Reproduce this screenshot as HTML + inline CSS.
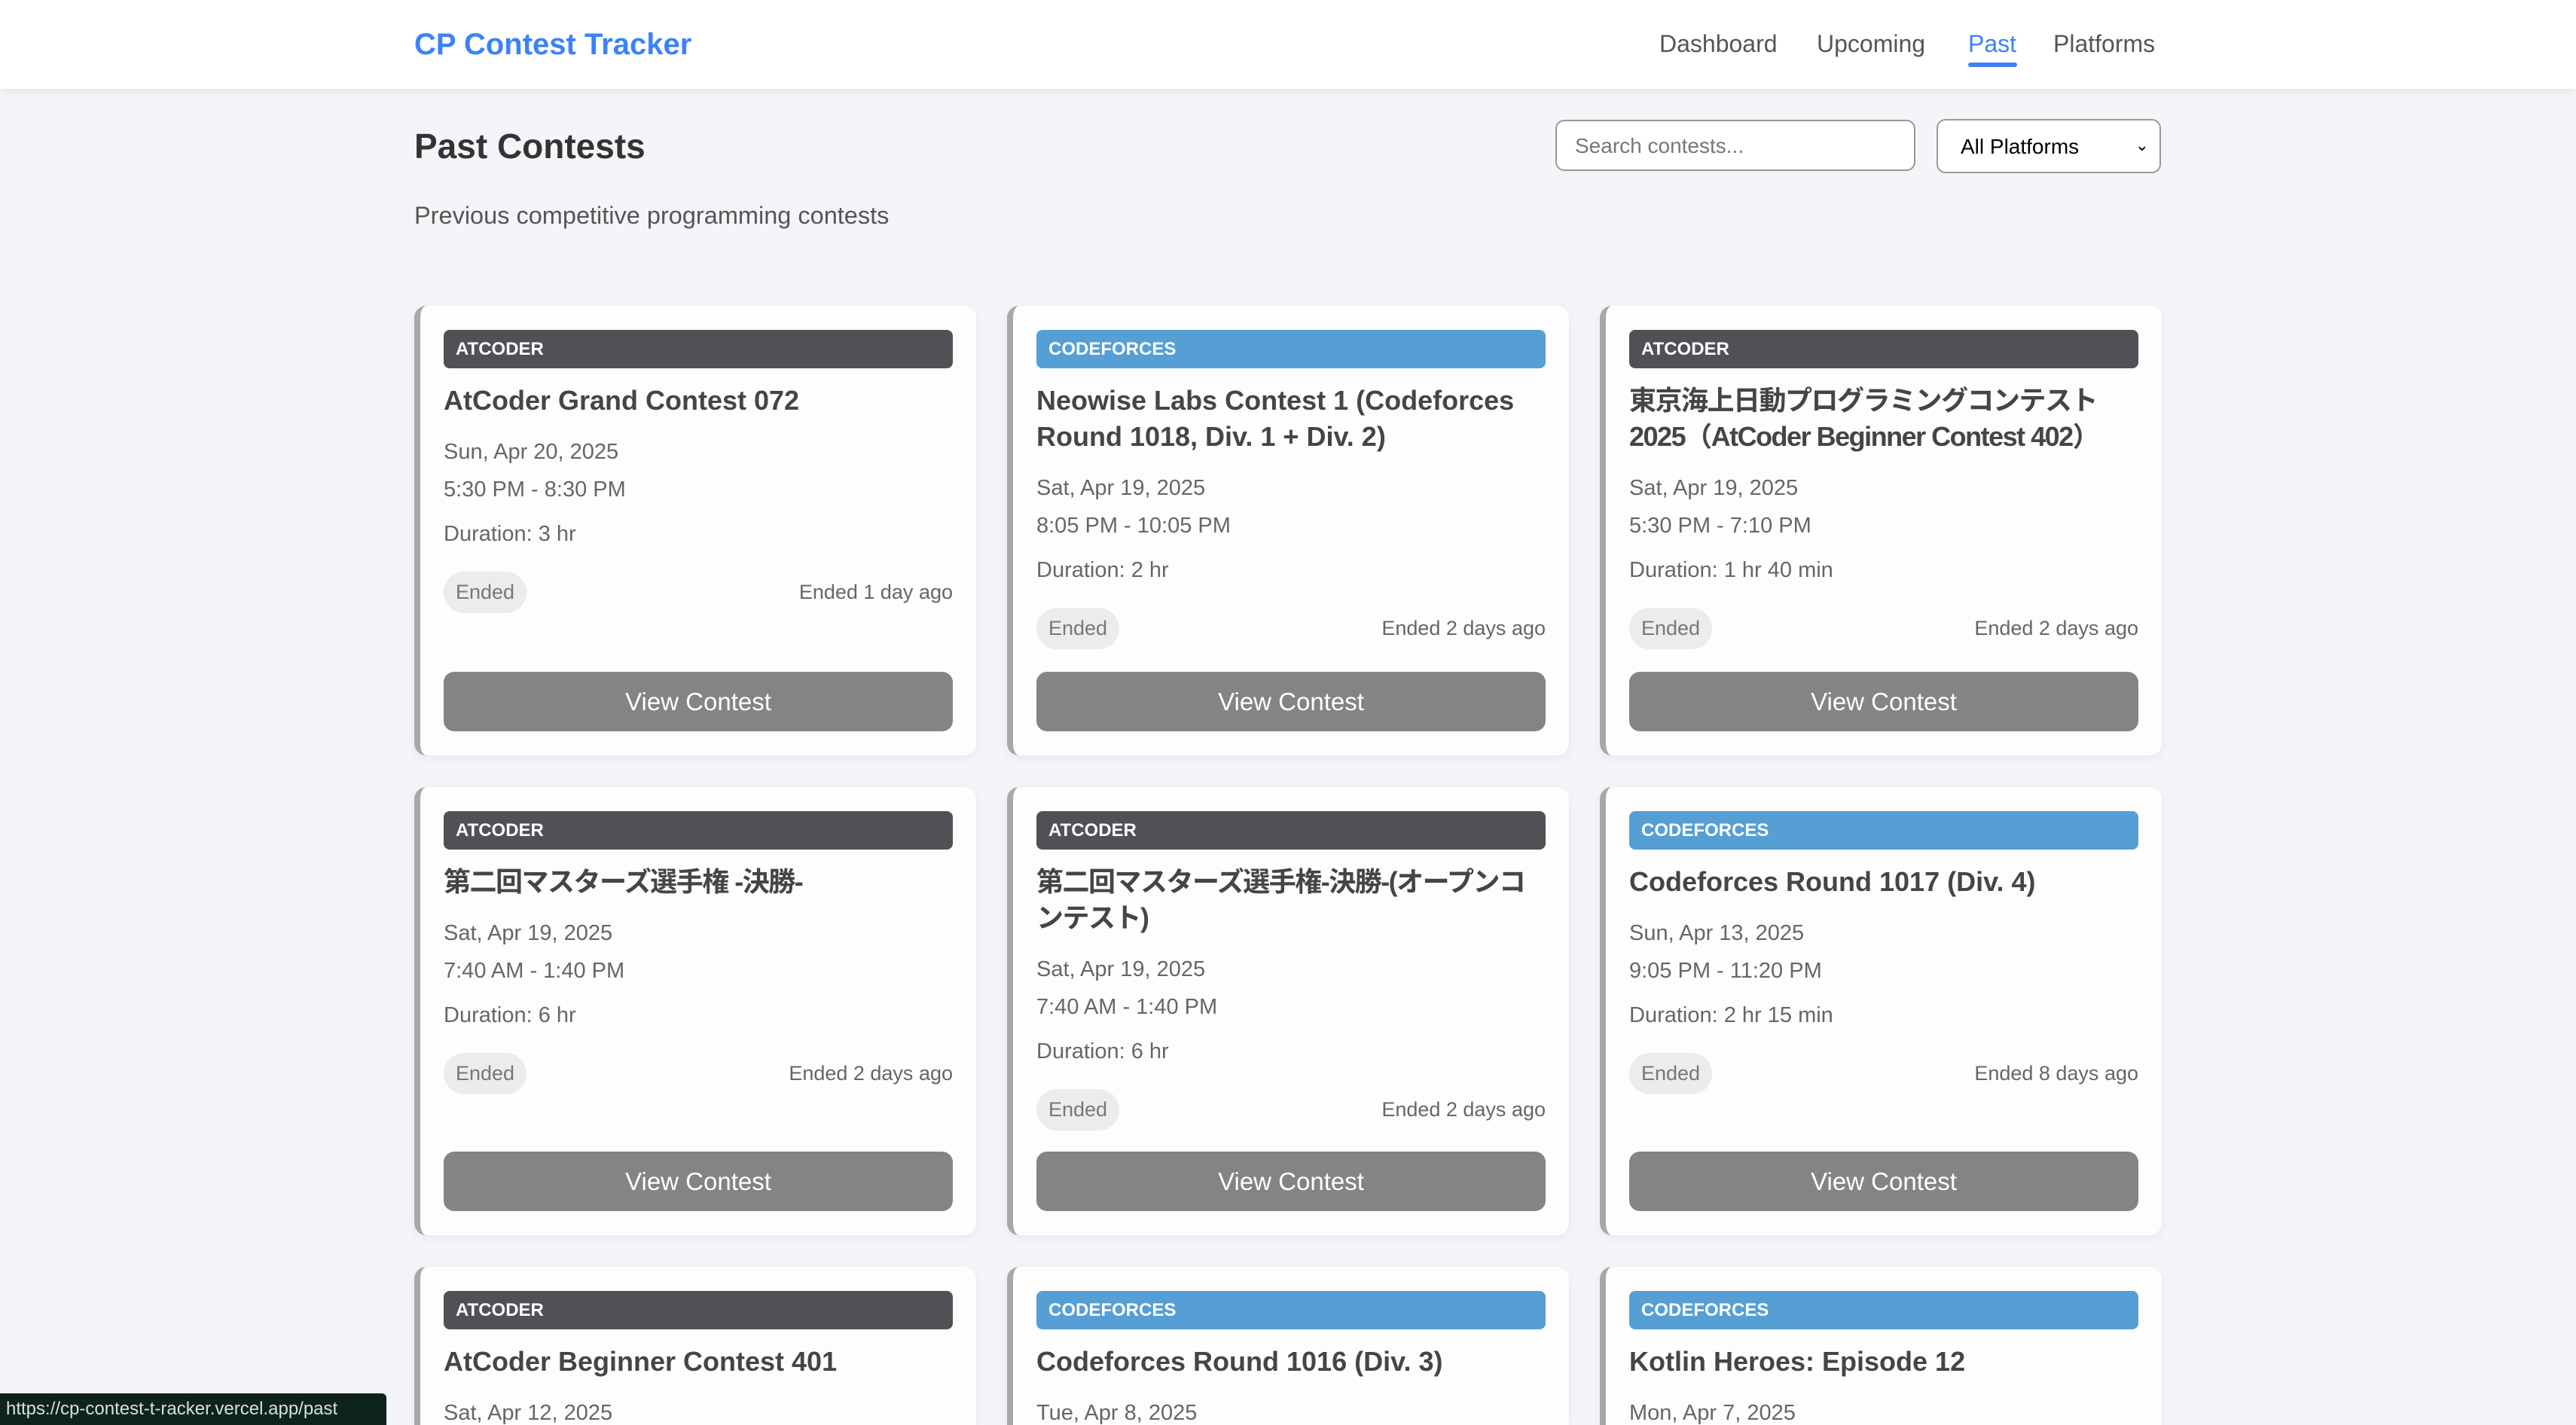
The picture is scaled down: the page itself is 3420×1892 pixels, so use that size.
<!DOCTYPE html>
<html style="height:1892px;overflow:hidden"><head><meta charset="utf-8"><style>
*{box-sizing:border-box;margin:0;padding:0}
body{width:3420px;height:1892px;overflow:hidden;background:#f4f5f9;font-family:"Liberation Sans","Noto Sans CJK JP",sans-serif;position:relative}
.hdr{position:absolute;left:0;top:0;width:3420px;height:118px;background:#fff;box-shadow:0 4px 12px rgba(0,0,0,.07)}
.logo{position:absolute;left:550px;top:36px;font-size:40px;font-weight:bold;color:#3b82f6;line-height:46px}
.nav{position:absolute;top:38px;font-size:32px;color:#555;line-height:40px}
.ul{position:absolute;left:2613px;top:83px;width:65px;height:6px;background:#3b82f6;border-radius:3px}
h1{position:absolute;left:550px;top:166px;font-size:46px;color:#333;line-height:56px}
.sub{position:absolute;left:550px;top:266px;font-size:32.5px;color:#555;line-height:40px}
.search{position:absolute;left:2065px;top:159px;width:478px;height:68px;border:2px solid #999;border-radius:12px;background:#fff;font-size:28px;color:#777;padding:18px 24px;line-height:30px}
.sel{position:absolute;left:2571px;top:158px;width:298px;height:72px;border:2px solid #999;border-radius:12px;background:#fff;font-size:28px;color:#000;padding:20px 30px;line-height:30px}
.sel span{position:absolute;right:14px;top:18px;font-size:22px}
.card{position:absolute;width:746px;background:#fdfdfd;border-radius:16px;border-left:8px solid #a8a8a8;box-shadow:0 3px 14px rgba(0,0,0,.06);padding:32px 31px 32px 31px;display:flex;flex-direction:column;overflow:hidden}
.b{height:51px;border-radius:8px;color:#fff;font-weight:bold;font-size:24px;line-height:51px;padding-left:16px}
.at{background:#505155}.cf{background:#559fd5}
.t{margin-top:19px;font-size:36px;font-weight:600;color:#454545;line-height:48px;white-space:nowrap}
.jp{letter-spacing:-1.5px}
.d{margin-top:21px;font-size:29px;color:#666;line-height:46px}
.tm{margin-top:4px;font-size:29px;color:#666;line-height:46px}
.du{margin-top:13px;font-size:29px;color:#666;line-height:46px}
.row{margin-top:27px;display:flex;justify-content:space-between;align-items:center;height:55px}
.pill{background:#ececec;border-radius:28px;height:55px;line-height:55px;padding:0 16px;font-size:27px;color:#777}
.ago{font-size:27px;color:#666}
.btn{margin-top:auto;height:79px;border-radius:14px;background:#848484;color:#fff;font-size:33px;text-align:center;line-height:79px;flex-shrink:0}
.status{position:absolute;left:0;top:1850px;width:513px;height:42px;background:#0f231d;color:#d6e0dc;font-size:24px;line-height:42px;padding-left:8px;border-top-right-radius:6px}
</style></head><body>
<div class="hdr">
<div class="logo">CP Contest Tracker</div>
<div class="nav" style="left:2203px">Dashboard</div>
<div class="nav" style="left:2412px">Upcoming</div>
<div class="nav" style="left:2613px;color:#3b82f6">Past</div>
<div class="nav" style="left:2726px">Platforms</div>
<div class="ul"></div>
</div>
<h1>Past Contests</h1>
<div class="sub">Previous competitive programming contests</div>
<div class="search">Search contests...</div>
<div class="sel">All Platforms<span>&#8964;</span></div>

<div class="card" style="left:550px;top:406px;height:597px"><div class="b at">ATCODER</div><div class="t">AtCoder Grand Contest 072</div><div class="d">Sun, Apr 20, 2025</div><div class="tm">5:30 PM - 8:30 PM</div><div class="du">Duration: 3 hr</div><div class="row"><span class="pill">Ended</span><span class="ago">Ended 1 day ago</span></div><div class="btn">View Contest</div></div>
<div class="card" style="left:1337px;top:406px;height:597px"><div class="b cf">CODEFORCES</div><div class="t">Neowise Labs Contest 1 (Codeforces<br>Round 1018, Div. 1 + Div. 2)</div><div class="d">Sat, Apr 19, 2025</div><div class="tm">8:05 PM - 10:05 PM</div><div class="du">Duration: 2 hr</div><div class="row"><span class="pill">Ended</span><span class="ago">Ended 2 days ago</span></div><div class="btn">View Contest</div></div>
<div class="card" style="left:2124px;top:406px;height:597px"><div class="b at">ATCODER</div><div class="t jp">東京海上日動プログラミングコンテスト<br>2025（AtCoder Beginner Contest 402）</div><div class="d">Sat, Apr 19, 2025</div><div class="tm">5:30 PM - 7:10 PM</div><div class="du">Duration: 1 hr 40 min</div><div class="row"><span class="pill">Ended</span><span class="ago">Ended 2 days ago</span></div><div class="btn">View Contest</div></div>

<div class="card" style="left:550px;top:1045px;height:595px"><div class="b at">ATCODER</div><div class="t jp">第二回マスターズ選手権 -決勝-</div><div class="d">Sat, Apr 19, 2025</div><div class="tm">7:40 AM - 1:40 PM</div><div class="du">Duration: 6 hr</div><div class="row"><span class="pill">Ended</span><span class="ago">Ended 2 days ago</span></div><div class="btn">View Contest</div></div>
<div class="card" style="left:1337px;top:1045px;height:595px"><div class="b at">ATCODER</div><div class="t jp">第二回マスターズ選手権-決勝-(オープンコ<br>ンテスト)</div><div class="d">Sat, Apr 19, 2025</div><div class="tm">7:40 AM - 1:40 PM</div><div class="du">Duration: 6 hr</div><div class="row"><span class="pill">Ended</span><span class="ago">Ended 2 days ago</span></div><div class="btn">View Contest</div></div>
<div class="card" style="left:2124px;top:1045px;height:595px"><div class="b cf">CODEFORCES</div><div class="t">Codeforces Round 1017 (Div. 4)</div><div class="d">Sun, Apr 13, 2025</div><div class="tm">9:05 PM - 11:20 PM</div><div class="du">Duration: 2 hr 15 min</div><div class="row"><span class="pill">Ended</span><span class="ago">Ended 8 days ago</span></div><div class="btn">View Contest</div></div>

<div class="card" style="left:550px;top:1682px;height:210px;border-bottom-left-radius:0;border-bottom-right-radius:0"><div class="b at">ATCODER</div><div class="t">AtCoder Beginner Contest 401</div><div class="d">Sat, Apr 12, 2025</div></div>
<div class="card" style="left:1337px;top:1682px;height:210px;border-bottom-left-radius:0;border-bottom-right-radius:0"><div class="b cf">CODEFORCES</div><div class="t">Codeforces Round 1016 (Div. 3)</div><div class="d">Tue, Apr 8, 2025</div></div>
<div class="card" style="left:2124px;top:1682px;height:210px;border-bottom-left-radius:0;border-bottom-right-radius:0"><div class="b cf">CODEFORCES</div><div class="t">Kotlin Heroes: Episode 12</div><div class="d">Mon, Apr 7, 2025</div></div>

<div class="status">https://cp-contest-t-racker.vercel.app/past</div>
</body></html>
